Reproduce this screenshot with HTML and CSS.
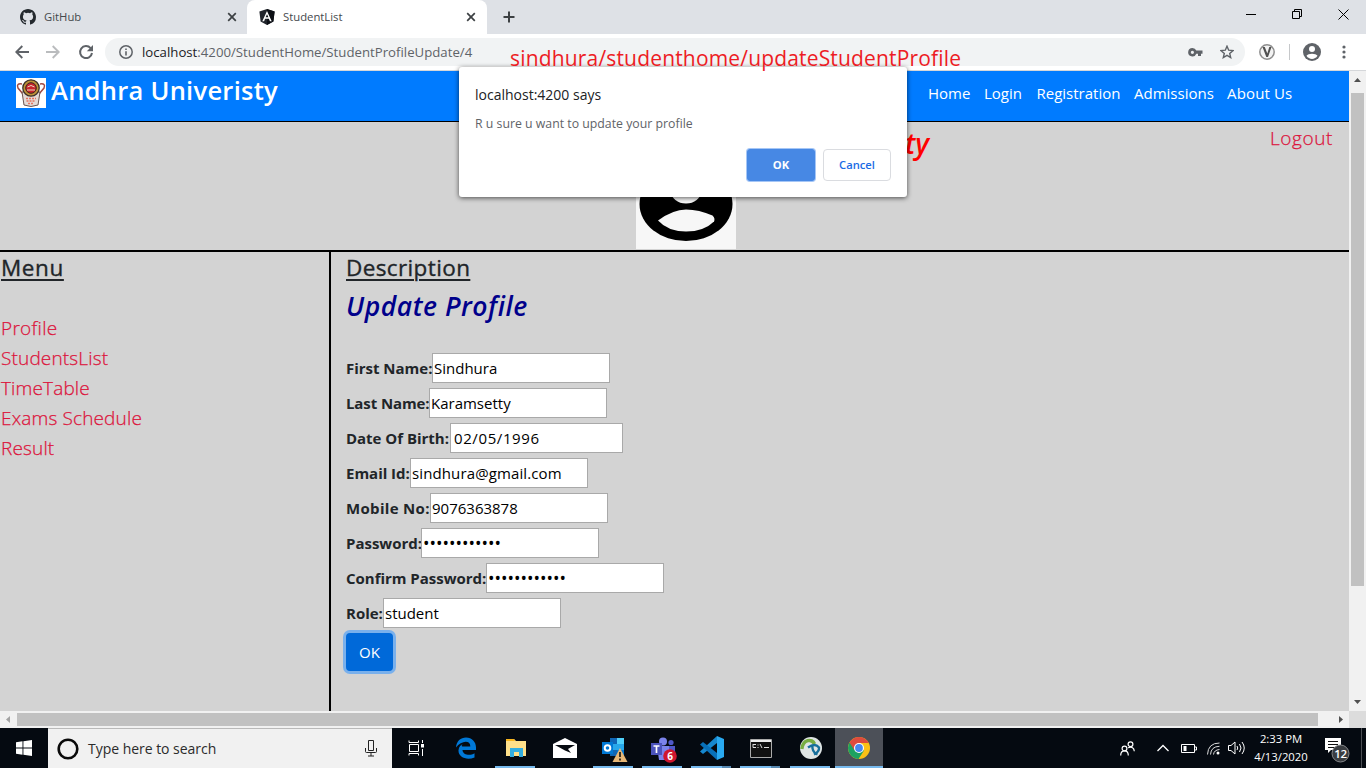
FILE: index.html
```html
<!DOCTYPE html>
<html lang="en">
<head>
<meta charset="utf-8">
<title>StudentList</title>
<link rel="stylesheet" href="styles.css">
</head>
<body>
<div class="tabs">
  <div class="tab">
    <svg class="fav" width="16" height="16" viewBox="0 0 16 16"><path fill="#24292e" d="M8 0C3.58 0 0 3.58 0 8c0 3.54 2.29 6.53 5.47 7.59.4.07.55-.17.55-.38 0-.19-.01-.82-.01-1.49-2.01.37-2.53-.49-2.69-.94-.09-.23-.48-.94-.82-1.13-.28-.15-.68-.52-.01-.53.63-.01 1.08.58 1.23.82.72 1.21 1.87.87 2.33.66.07-.52.28-.87.51-1.07-1.78-.2-3.64-.89-3.64-3.95 0-.87.31-1.59.82-2.15-.08-.2-.36-1.02.08-2.12 0 0 .67-.21 2.2.82a7.6 7.6 0 0 1 4 0c1.53-1.04 2.2-.82 2.2-.82.44 1.1.16 1.92.08 2.12.51.56.82 1.27.82 2.15 0 3.07-1.87 3.75-3.65 3.95.29.25.54.73.54 1.48 0 1.07-.01 1.93-.01 2.2 0 .21.15.46.55.38A8.01 8.01 0 0 0 16 8c0-4.42-3.58-8-8-8z"/></svg>
    <span class="tab-title t-github">GitHub</span>
    <svg class="x" width="10" height="10" viewBox="0 0 10 10"><path d="M1.2 1.2l7.6 7.6M8.8 1.2L1.2 8.8" stroke="#3c4043" stroke-width="1.7"/></svg>
  </div>
  <div class="tab active">
    <svg class="fav" width="16" height="16" viewBox="0 0 16 16"><path fill="#20242b" d="M8 0l7.6 2.6-1.2 10L8 16l-6.400-3.400L.4 2.600z"/><path fill="#0c0f15" d="M8 0l7.600 2.600-1.200 10L8 16z"/><path fill="#fff" d="M8 1.900L3.300 12.200h1.800l1-2.400h3.800l1 2.400h1.800zM8 5.300l1.400 3H6.600z"/></svg>
    <span class="tab-title t-student">StudentList</span>
    <svg class="x" width="10" height="10" viewBox="0 0 10 10"><path d="M1.200 1.200l7.600 7.600M8.800 1.200L1.200 8.800" stroke="#3c4043" stroke-width="1.700"/></svg>
  </div>
  <svg class="plus" width="12" height="12" viewBox="0 0 12 12"><path d="M6 .5v11M.5 6h11" stroke="#3c4043" stroke-width="2"/></svg>
  <div class="winbtns">
    <svg width="11" height="11" viewBox="0 0 11 11"><path d="M0 5.500h10" stroke="#000"/></svg>
    <svg width="11" height="11" viewBox="0 0 11 11" fill="none" stroke="#000"><path d="M.5 2.500h7v7h-7zM2.500 2.500v-2h7v7h-2"/></svg>
    <svg width="11" height="11" viewBox="0 0 11 11"><path d="M.5.5l10 10M10.500.5l-10 10" stroke="#000"/></svg>
  </div>
</div>
<div class="toolbar">
  <svg class="nav-i" width="14" height="14" viewBox="0 0 14 14" fill="none" stroke="#5f6368" stroke-width="1.900"><path d="M14 7H1.500M7.300 1L1.300 7l6 6"/></svg>
  <svg class="nav-i" width="14" height="14" viewBox="0 0 14 14" fill="none" stroke="#babcbe" stroke-width="1.900"><path d="M0 7h12.500M6.700 1l6 6-6 6"/></svg>
  <svg class="nav-i" width="16" height="16" viewBox="0 0 16 16"><path d="M12.600 4.100A6 6 0 1 0 14 9" fill="none" stroke="#5f6368" stroke-width="2"/><path d="M15 1v6.200H8.800z" fill="#5f6368"/></svg>
  <div class="omni">
    <svg width="14" height="14" viewBox="0 0 14 14"><circle cx="7" cy="7" r="6.200" fill="none" stroke="#5f6368" stroke-width="1.500"/><path d="M7 6.300v4.200M7 3.500v1.500" stroke="#5f6368" stroke-width="1.600"/></svg>
    <span class="url"><b>localhost</b>:4200/StudentHome/StudentProfileUpdate/4</span>
    <svg class="key" width="15" height="9" viewBox="0 0 15 9"><path d="M4.400 0a4.200 4.200 0 1 0 3.900 5.700H10V8h3V5.700h1.500V2.600H8.300A4.200 4.200 0 0 0 4.400 0zm0 2.700a1.600 1.600 0 1 1 0 3.200 1.600 1.600 0 0 1 0-3.200z" fill="#5f6368" fill-rule="evenodd"/></svg>
    <svg class="star" width="14" height="14" viewBox="0 0 14 14"><path d="M7 1.200l1.700 4 4.300.4-3.300 2.800 1 4.200L7 10.400l-3.700 2.200 1-4.200L1 5.600l4.300-.4z" fill="none" stroke="#5f6368" stroke-width="1.400"/></svg>
  </div>
  <svg class="vext" width="16" height="16" viewBox="0 0 16 16"><circle cx="8" cy="8" r="7.200" fill="#f3f3f3" stroke="#8e8e8e" stroke-width="1.500"/><path d="M3.500 3h2.300L8.300 9.500l2-6.500h2.200L9 13H7.300z" fill="#505050"/></svg>
  <i class="vsep"></i>
  <svg width="18" height="18" viewBox="0 0 18 18"><circle cx="9" cy="9" r="9" fill="#5f6368"/><circle cx="9" cy="6" r="3" fill="#fff"/><path d="M3.500 12.800C5 10 13 10 14.500 12.800 12 17 6 17 3.500 12.800z" fill="#fff"/></svg>
  <svg class="dots" width="4" height="14" viewBox="0 0 4 14" fill="#5f6368"><circle cx="2" cy="2" r="1.600"/><circle cx="2" cy="7" r="1.600"/><circle cx="2" cy="12" r="1.600"/></svg>
</div>

<div class="viewport">
  <div class="page">
    <nav class="navbar">
      <svg class="crest" width="30" height="30" viewBox="0 0 30 30"><path fill="#fff" d="M0 0h30v30H0z"/><path d="M6 6Q0 5 2 10l5 6M24 6q6-1 4 4l-5 6" fill="none" stroke="#a04a44" stroke-width="1.500"/><path d="M6 14l2 13q7 3 14 0l2-13z" fill="#e3dad6" stroke="#6d5550"/><circle cx="15" cy="10" r="8.200" fill="#bd9238" stroke="#3b302a" stroke-width="1.300"/><circle cx="15" cy="10" r="5.300" fill="#c8232b" stroke="#3e2420"/><path d="M11.500 9q3.500-3 7 0M11 12h8" stroke="#f0d9c0" fill="none"/><path d="M10 20.500h10M10.500 23h9M12 25.500h6" stroke="#e5735f" stroke-width="1.500" stroke-dasharray="2 1"/></svg>
      <span class="brand">Andhra Univeristy</span>
      <span class="lk l1">Home</span><span class="lk l2">Login</span><span class="lk l3">Registration</span><span class="lk l4">Admissions</span><span class="lk l5">About Us</span>
    </nav>
    <header class="banner">
      <div class="banner-row"><h2 class="uni">ty</h2><a class="logout">Logout</a></div>
      <svg class="avatar" width="100" height="52" viewBox="0 0 100 52"><path fill="#f7f7f7" d="M0 0h100v52H0z"/><ellipse cx="50" cy="7" rx="46.500" ry="37" fill="#000"/><ellipse cx="50" cy="-5.500" rx="15" ry="12" fill="#f7f7f7"/><path d="M22 23.500Q37 12.500 50 12.500t26.500 6q3 3 1.500 6Q68 34.500 50 34.500T22 23.500z" fill="#f7f7f7"/></svg>
    </header>
    <div class="cols">
      <aside class="side">
        <h4 class="h-menu">Menu</h4>
        <ul>
          <li class="m1">Profile</li><li class="m2">StudentsList</li><li class="m3">TimeTable</li><li class="m4">Exams Schedule</li><li class="m5">Result</li>
        </ul>
      </aside>
      <main class="main">
        <h4 class="h-desc">Description</h4>
        <h3>Update Profile</h3>
        <form>
          <div class="row first"><label>First Name:</label><input value="Sindhura"></div>
          <div class="row last"><label>Last Name:</label><input value="Karamsetty"></div>
          <div class="row dob"><label>Date Of Birth:</label><input value="02/05/1996"></div>
          <div class="row email"><label>Email Id:</label><input value="sindhura@gmail.com"></div>
          <div class="row mobile"><label>Mobile No:</label><input value="9076363878"></div>
          <div class="row pass"><label>Password:</label><input value="••••••••••••"></div>
          <div class="row confirm"><label>Confirm Password:</label><input value="••••••••••••"></div>
          <div class="row role"><label>Role:</label><input value="student"></div>
          <button type="button" class="submit">OK</button>
        </form>
      </main>
    </div>
  </div>
  <div class="vbar">
    <svg width="17" height="17" viewBox="0 0 17 17"><path d="M5 11l3.500-4L12 11z" fill="#505050"/></svg>
    <i class="vthumb"></i>
    <svg width="17" height="17" viewBox="0 0 17 17"><path d="M5 6l3.500 4L12 6z" fill="#505050"/></svg>
  </div>
  <div class="hbar">
    <svg width="17" height="17" viewBox="0 0 17 17"><path d="M10 5L6 8.500 10 12z" fill="#a3a3a3"/></svg>
    <i class="hthumb"></i>
    <svg width="17" height="17" viewBox="0 0 17 17"><path d="M7 5l4 3.500L7 12z" fill="#505050"/></svg>
  </div>
  <div class="corner"></div>
</div>

<footer class="taskbar">
  <div class="start"><svg width="16" height="16" viewBox="0 0 16 16" fill="#fff"><path d="M0 2.200L6.500 1.300V7.600H0zM7.400 1.200L16 0v7.600H7.400zM0 8.500h6.500v6.200L0 13.800zM7.400 8.500H16V16l-8.600-1.200z"/></svg></div>
  <div class="search">
    <svg width="22" height="22" viewBox="0 0 22 22"><circle cx="11" cy="11" r="9.300" fill="none" stroke="#0a0a0a" stroke-width="2.600"/></svg>
    <span>Type here to search</span>
    <svg class="mic" width="12" height="17" viewBox="0 0 12 17" fill="none" stroke="#222"><path d="M3.500.5h5v10h-5zM.5 8v3.500q0 1 1 1h9q1 0 1-1V8M6 12.500V16M3 16h6"/></svg>
  </div>
  <div class="apps">
    <div class="app"><svg width="17" height="17" viewBox="0 0 17 17" fill="none" stroke="#fff"><path d="M1 .5v2h9.500v-2M1.500 4.500h9v7h-9zM1 15.500v-2h9.500v2M14.500 0v3M14.500 9v7"/><path d="M13 4h3v3.500h-3z" fill="#fff" stroke="none"/></svg></div>
    <div class="app"><svg width="22" height="22" viewBox="0 0 22 22"><path fill="#0078d7" d="M1 10.500C1.500 4 5.700.5 11 .5c6 0 10 4.500 10 10V13H7.500c.3 5 7.500 6.200 12 3.300v4.200C11.500 24 3 20 3.500 13.300 3.800 9.700 6 7.700 8.200 6.800 6.500 8 6.300 9.500 7.500 9.500h7.800C15.500 2.500 6 3.600 1 10.500z"/></svg></div>
    <div class="app run"><svg width="22" height="20" viewBox="0 0 22 20"><path d="M1 1h8l2 2h10v15H1z" fill="#ffe08a"/><path d="M1 1h8l1 2H1z" fill="#f8b51e"/><path d="M5 19v-9h13v9h-4v-5H9v5z" fill="#33aee0"/></svg></div>
    <div class="app"><svg width="24" height="20" viewBox="0 0 24 20"><path d="M0 6L12 0l12 6v14H0z" fill="#fff"/><path d="M2 7h20l-7 4 3 4-6-2.500z" fill="#070b11"/></svg></div>
    <div class="app run"><svg class="big" width="27" height="26" viewBox="0 0 27 26"><path fill="#28a8ea" d="M9 1h14v18H9z"/><path fill="#1066b5" d="M9 1h7v6H9zM9 13h7v6H9z"/><path fill="#50d0fa" d="M16 1h7v6h-7z"/><path fill="#0078d4" d="M16 13h7v6h-7zM1 5h11v12H1z"/><circle cx="6.500" cy="11" r="2.800" fill="none" stroke="#fff" stroke-width="2"/><path d="M19 11l7.500 14h-15z" fill="#e7b776"/><path d="M19 15v5M19 21.500v2" stroke="#111" stroke-width="1.600"/></svg></div>
    <div class="app run"><svg class="big" width="27" height="26" viewBox="0 0 27 26"><circle cx="13" cy="4.500" r="4" fill="#7b83eb"/><circle cx="21" cy="5.500" r="2.600" fill="#5059c9"/><path d="M15 9h10v9H15z" fill="#5059c9"/><path d="M7 9h12v14H9z" fill="#7b83eb"/><path d="M1 6h11v12H1z" fill="#4b53bc"/><path d="M3.500 9h6M6.500 9v7" stroke="#fff" stroke-width="1.700"/><circle cx="20" cy="19" r="6.800" fill="#d0162e"/><text class="badge6" x="20" y="23" text-anchor="middle">6</text></svg></div>
    <div class="app run split"><svg width="24" height="24" viewBox="0 0 24 24"><path d="M17 0l7 3v18l-7 3z" fill="#29a9f0"/><path d="M17 0v7L3 18l-3-2.500z" fill="#1688cf"/><path d="M17 24v-7L3 6 0 8.500z" fill="#0870b8"/></svg></div>
    <div class="app run split"><svg width="22" height="19" viewBox="0 0 22 19"><path d="M.5.500h21v18H.5z" fill="#111" stroke="#aaa"/><path d="M1 1h20v2H1z" fill="#eee"/><path d="M3 5.500h3M3 5v3.500h3M8 5.500v1M8 8v1M10 5l2 4M14 8.500h5" stroke="#ddd" fill="none"/></svg></div>
    <div class="app run"><svg width="22" height="22" viewBox="0 0 22 22"><circle cx="11" cy="11" r="11" fill="#dfe5e5"/><path d="M1.800 12C3 2.500 12 1 14.500 7" fill="none" stroke="#77ad42" stroke-width="3.500"/><path d="M8 10.500q7-5 11 0 .5 4-5 7M12.500 8q-1 7 5 9.500" fill="none" stroke="#176f9c" stroke-width="2.400"/></svg></div>
    <div class="app run cur"><svg width="22" height="22" viewBox="0 0 22 22"><circle cx="11" cy="11" r="11" fill="#fbc116"/><path d="M11 11L1.500 5.500A11 11 0 0 0 10.500 22L16 13.500z" fill="#1da261"/><path d="M11 6h9.800l-.3-.5A11 11 0 0 0 1.500 5.500L6.300 13z" fill="#dd4b3e"/><circle cx="11" cy="11" r="5" fill="#fff"/><circle cx="11" cy="11" r="3.900" fill="#4688f1"/></svg></div>
  </div>
  <div class="tray">
    <svg class="people" width="15" height="15" viewBox="0 0 15 15" fill="none" stroke="#fff" stroke-width="1.200"><circle cx="10.500" cy="3.200" r="2.400"/><circle cx="4.500" cy="7.500" r="2.400"/><path d="M.7 14.500q0-4.600 3.800-4.600t3.800 4.600M8 6.800q6-2 6.300 3.500"/></svg>
    <svg class="chev" width="12" height="8" viewBox="0 0 12 8"><path d="M.5 7L6 1.500 11.500 7" fill="none" stroke="#fff" stroke-width="1.300"/></svg>
    <svg class="bat" width="16" height="9" viewBox="0 0 16 9"><path d="M.5.500h13v8H.5zM14 3h1.500v3H14" fill="none" stroke="#fff"/><path d="M2.500 2h3v5h-3z" fill="#fff"/></svg>
    <svg class="wifi" width="13" height="13" viewBox="0 0 13 13" fill="none" stroke="#ddd"><path d="M.5 12.500Q1 1 12.500 1M3.500 12.500Q4 4.500 12.500 4.300M6.500 12.500Q7 8 12.500 7.500"/><circle cx="11" cy="11" r="1.500" fill="#fff" stroke="none"/></svg>
    <svg class="vol" width="17" height="14" viewBox="0 0 17 14" fill="none" stroke="#fff"><path d="M.5 4.500H3L7 1v12L3 9.500H.5zM9 5q1.500 2 0 4M11.500 3q3 4 0 8M14 1q4.500 6 0 12"/></svg>
    <div class="clock"><span class="time">2:33 PM</span><span class="date">4/13/2020</span></div>
    <svg class="note" width="26" height="26" viewBox="0 0 26 26"><path d="M1 1h16v12H7l-3 3v-3H1z" fill="#fff"/><path d="M4 4.500h10M4 7.500h10M4 10.500h7" stroke="#111"/><circle cx="16.500" cy="16.500" r="8.500" fill="#3a3d41" stroke="#85878a"/><text class="badge12" x="16.500" y="20.500" text-anchor="middle">12</text></svg>
    <i class="peek"></i>
  </div>
</footer>

<div class="dialog">
  <div class="d-title">localhost:4200 says</div>
  <div class="d-msg">R u sure u want to update your profile</div>
  <div class="d-btns"><span class="d-ok">OK</span><span class="d-cancel">Cancel</span></div>
</div>
<div class="note-text">sindhura/studenthome/updateStudentProfile</div>
</body>
</html>
```
FILE: styles.css
```css
* { box-sizing: border-box; }
body { margin: 0; width: 1366px; height: 768px; overflow: hidden; display: flex; flex-direction: column; position: relative; font-family: "Open Sans", "Noto Sans", sans-serif; color: #212529; white-space: nowrap; }
svg { display: block; flex: none; }
h2, h3, h4, ul { margin: 0; padding: 0; }

.tabs { height: 34px; background: #dee1e6; display: flex; align-items: center; flex: none; }
.tab { width: 247px; height: 34px; display: flex; align-items: center; padding: 0 10px 0 20px; font-size: 11.3px; color: #45494d; }
.tab.active { width: 240px; background: #fff; border-radius: 8px 8px 0 0; padding-left: 12px; padding-right: 11px; }
.tab-title { margin-left: 8px; flex: 1; padding-bottom: 1px; }
.plus { margin-left: 16px; }
.winbtns { margin-left: auto; display: flex; gap: 35px; padding: 0 17px 6px 0; }

.toolbar { height: 37px; background: #fff; border-bottom: 1px solid #d5d7da; display: flex; align-items: center; padding: 0 20px 0 15px; flex: none; }
.nav-i { margin-right: 17px; }
.nav-i:nth-child(3) { margin-right: 0; margin-left: 1px; }
.omni { margin-left: 11px; width: 1140px; height: 28px; border-radius: 14px; background: #f1f3f4; display: flex; align-items: center; padding: 0 11px 0 14px; }
.url { margin-left: 9px; font-size: 13.2px; color: #5f6368; letter-spacing: .01px; }
.url b { font-weight: 400; color: #202124; }
.key { margin-left: auto; }
.star { margin-left: 17px; }
.vext { margin-left: 14px; }
.vsep { width: 1px; height: 16px; background: #c6c8ca; margin: 0 13px 0 14px; }
.dots { margin-left: auto; }

.viewport { height: 657px; flex: none; display: grid; grid-template: 640px 17px / 1349px 17px; }
.page { background: #d3d3d3; overflow: hidden; display: flex; flex-direction: column; }
.navbar { height: 51px; flex: none; background: #007bff; border-bottom: 1px solid #000; color: #fff; display: flex; padding: 7px 0 0 16px; }
.brand { font-size: 25.5px; font-weight: 600; line-height: 24px; letter-spacing: .27px; margin-left: 5px; width: 877px; }
.lk { font-size: 15px; line-height: 30px; }
.l1 { width: 56px; } .l2 { width: 52.500px; } .l3 { width: 97.500px; } .l4 { width: 93px; }
.l5 { letter-spacing: .15px; }
.banner { height: 130px; flex: none; border-bottom: 2px solid #000; }
.banner-row { height: 75px; display: flex; }
.uni { font-size: 28px; font-style: italic; font-weight: 600; color: red; line-height: 42px; margin-left: 905px; width: 365px; }
.logout { font-size: 19px; color: #dc143c; line-height: 33px; letter-spacing: .6px; }
.avatar { margin-left: 636px; }
.cols { display: flex; flex: 1; }
.side { width: 331px; border-right: 2px solid #000; padding-left: 1px; }
h4 { font-size: 22.500px; font-weight: 400; -webkit-text-stroke: .35px #212529; line-height: 29px; height: 31px; text-decoration: underline; text-decoration-thickness: 2px; text-underline-offset: 3px; padding-top: 1px; }
.h-menu { letter-spacing: .6px; }
.h-desc { letter-spacing: .38px; }
.side ul { list-style: none; margin-top: 30px; }
.side li { height: 30px; line-height: 30px; font-size: 19px; color: #dc143c; font-weight: 300; letter-spacing: .15px; }
.side li, .logout { font-weight: 300; -webkit-text-stroke: .25px #dc143c; }
.side .m1 { letter-spacing: .3px; }
.main { padding-left: 15px; }
h3 { font-size: 26.500px; font-style: italic; font-weight: 600; color: #00008b; line-height: 34px; letter-spacing: .52px; margin-top: 6px; margin-bottom: 30px; }
.row { height: 30px; margin-bottom: 5px; display: flex; }
.row label { font-size: 15px; font-weight: 700; line-height: 30px; width: 86px; letter-spacing: -.02px; }
.row input { width: 178px; height: 30px; border: 1px solid #a9a9a9; border-radius: 0; background: #fff; padding: 0 1px; font: 15px "Open Sans", sans-serif; color: #000; }
.row.last label { width: 83px; letter-spacing: -.1px; }
.row.dob label { width: 104px; }
.row.dob input { width: 173px; padding-left: 3px; letter-spacing: .6px; }
.row.email label { width: 64px; }
.row.email input { letter-spacing: .12px; }
.row.mobile label { width: 84px; letter-spacing: .32px; }
.row.pass label { width: 75px; }
.row.confirm label { width: 140px; }
.row.pass input, .row.confirm input { font-size: 17.300px; }
.row.role label { width: 37px; }
.submit { width: 47px; height: 38px; border: 0; border-radius: 4px; background: #0069d9; color: #fff; font: 15px "Open Sans", sans-serif; padding: 0; box-shadow: 0 0 0 3px #79b0ec; display: block; }

.vbar { background: #f1f1f1; display: flex; flex-direction: column; align-items: center; }
.vthumb { width: 13px; height: 493px; margin: 5px 0 auto; background: #c1c1c1; }
.hbar { background: #f1f1f1; display: flex; align-items: center; }
.hthumb { height: 13px; width: 1301px; background: #c1c1c1; margin-right: auto; }
.corner { background: #dcdcdc; }

.taskbar { height: 40px; flex: none; background: #050a11; display: flex; }
.start { width: 48px; display: flex; align-items: center; justify-content: center; }
.search { width: 344px; background: #f1f1f1; border-top: 1px solid #b9b9b9; display: flex; align-items: center; padding: 0 15px 0 9px; font-size: 14px; color: #2b2b2b; }
.search span { margin-left: 9px; letter-spacing: -.03px; }
.mic { margin-left: auto; }
.apps { display: flex; }
.app { width: 49px; display: flex; align-items: center; justify-content: center; }
.app:nth-child(3), .app:nth-child(9) { margin-left: 1px; }
.run { background: linear-gradient(#76b9ed, #76b9ed) 4px 38px / 40px 2px no-repeat; }
.split { background: linear-gradient(90deg, #76b9ed 31px, #5788b0 31px) 4px 38px / 40px 2px no-repeat; }
.cur { width: 48px; background: linear-gradient(#76b9ed, #76b9ed) 0 38px / 48px 2px no-repeat, #4c5058; }
.big { margin-top: 3px; margin-left: 2px; }
.badge6 { font: 700 10px "Open Sans", sans-serif; fill: #fff; }
.badge12 { font: 600 11.500px "Open Sans", sans-serif; fill: #fff; letter-spacing: -.3px; }
.tray { margin-left: auto; display: flex; align-items: center; color: #fff; }
.chev { margin-left: 22px; }
.bat { margin-left: 12px; }
.wifi { margin-left: 10px; }
.vol { margin-left: 8px; }
.clock { width: 54px; margin-left: 9px; display: flex; flex-direction: column; align-items: center; font-size: 11.300px; line-height: 18px; }
.note { margin: 4px 11px 0 16px; }
.peek { width: 1px; height: 40px; background: #4b4e53; margin-right: 4px; }

.dialog { position: absolute; left: 459px; top: 67px; width: 448px; height: 130px; background: #fff; border-radius: 3px; box-shadow: 0 1px 5px rgba(0,0,0,.65); padding: 17px 16px 0; }
.d-title { font-size: 14px; line-height: 22px; color: #202124; }
.d-msg { font-size: 12.300px; line-height: 20px; margin-top: 8px; color: #5f6368; }
.d-btns { display: flex; justify-content: flex-end; gap: 8px; margin-top: 15px; font-size: 11.2px; font-weight: 600; line-height: 30px; text-align: center; }
.d-ok { width: 68px; height: 32px; background: #4788e4; border: 1px solid #4788e4; border-radius: 3px; color: #fff; box-shadow: 0 0 0 1px #a5c6f6; font-weight: 700; }
.d-cancel { width: 68px; height: 32px; border: 1px solid #dadce0; border-radius: 4px; color: #1a6be5; }
.note-text { position: absolute; left: 510px; top: 43px; font-size: 21px; line-height: 30px; letter-spacing: .17px; color: #ed1c24; }
```
